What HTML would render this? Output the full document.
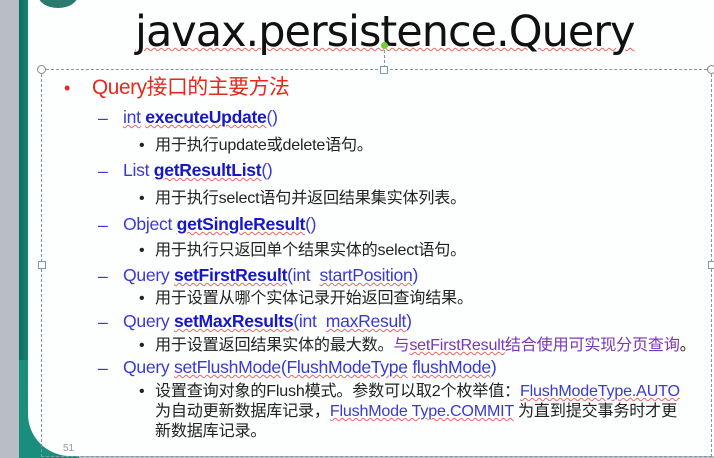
<!DOCTYPE html>
<html><head><meta charset="utf-8"><style>
body{margin:0;width:714px;height:458px;overflow:hidden;background:#b9bec4;position:relative;font-family:"Liberation Sans","Noto Sans CJK SC",sans-serif}
.a{position:absolute;white-space:nowrap}
.slide{position:absolute;left:28px;top:0;width:700px;height:456px;background:#fdfefe;border-bottom-left-radius:42px}
.teal{position:absolute;left:19px;top:0;width:12px;height:458px;background:linear-gradient(90deg,#0d6f63,#138c7c)}
.bl{position:absolute;left:19px;top:360px;width:60px;height:98px;background:#1a8e7c}
.t{font-size:17.6px;color:#3a3ad0;line-height:20px;letter-spacing:-0.3px}
.t b{color:#1717c8}
.s{font-size:16.1px;color:#222;line-height:20px;letter-spacing:-0.2px}
.d{color:#3a3ad0}
.w{text-decoration:underline wavy #e66;text-decoration-thickness:1px}
</style></head><body>
<div class="teal"></div>
<div class="bl"></div>
<div class="slide"></div>
<div class="a" style="left:38px;top:-18px;width:40px;height:26px;border-radius:50%;background:#2b7a6e"></div>
<div class="a" style="left:135px;top:4px;font-size:43px;color:#111;font-family:'DejaVu Sans','Liberation Sans',sans-serif;letter-spacing:-1px;line-height:56px"><span class="w">javax.persistence.Query</span></div>
<div class="a" style="left:41px;top:69px;width:669px;height:386px;border:1px dashed #8097aa"></div>
<div class="a" style="left:381px;top:42px;width:7px;height:7px;border-radius:50%;background:#7c3"></div>
<div class="a" style="left:384px;top:50px;height:18px;border-left:1px dashed #8097aa"></div>
<div class="a" style="left:37px;top:65px;width:7px;height:7px;border-radius:50%;border:1px solid #888;background:#fff"></div>
<div class="a" style="left:380px;top:66px;width:6px;height:6px;border:1px solid #8097aa;background:#fff"></div>
<div class="a" style="left:38px;top:261px;width:6px;height:6px;border:1px solid #8097aa;background:#fff"></div>
<div class="a" style="left:707px;top:65px;width:7px;height:7px;border-radius:50%;border:1px solid #888;background:#fff"></div>
<div class="a" style="left:708px;top:261px;width:6px;height:6px;border:1px solid #8097aa;background:#fff"></div>
<div class="a" style="left:64px;top:77px;font-size:18px;color:#e8271d;line-height:22px">•</div>
<div class="a" style="left:92px;top:75px;font-size:20.8px;color:#e8271d;line-height:26px;letter-spacing:-0.4px">Query接口的主要方法</div>

<div class="a t" style="left:98px;top:108px">–</div>
<div class="a t" style="left:123px;top:107px"><span class="w">int</span> <b class="w">executeUpdate</b>()</div>
<div class="a s" style="left:139px;top:135px">•</div><div class="a s" style="left:155px;top:135px">用于执行update或delete语句。</div>

<div class="a t" style="left:98px;top:161px">–</div>
<div class="a t" style="left:123px;top:160px">List <b class="w">getResultList</b>()</div>
<div class="a s" style="left:139px;top:188px">•</div><div class="a s" style="left:155px;top:188px">用于执行select语句并返回结果集实体列表。</div>

<div class="a t" style="left:98px;top:215px">–</div>
<div class="a t" style="left:123px;top:214px">Object <b class="w">getSingleResult</b>()</div>
<div class="a s" style="left:139px;top:240px">•</div><div class="a s" style="left:155px;top:240px">用于执行只返回单个结果实体的select语句。</div>

<div class="a t" style="left:98px;top:266px">–</div>
<div class="a t" style="left:123px;top:265px">Query <b class="w">setFirstResult</b>(int &nbsp;<span class="w">startPosition</span>)</div>
<div class="a s" style="left:139px;top:288px">•</div><div class="a s" style="left:155px;top:288px">用于设置从哪个实体记录开始返回查询结果。</div>

<div class="a t" style="left:98px;top:312px">–</div>
<div class="a t" style="left:123px;top:311px">Query <b class="w">setMaxResults</b>(int &nbsp;<span class="w">maxResult</span>)</div>
<div class="a s" style="left:139px;top:335px">•</div><div class="a s" style="left:155px;top:335px">用于设置返回结果实体的最大数。<span style="color:#7a35b8">与<span class="w">setFirstResult</span>结合使用可实现分页查询</span>。</div>

<div class="a t" style="left:98px;top:358px">–</div>
<div class="a t" style="left:123px;top:357px">Query <span class="w">setFlushMode</span>(<span class="w">FlushModeType</span> <span class="w">flushMode</span>)</div>
<div class="a s" style="left:139px;top:381px">•</div><div class="a s" style="left:155px;top:381px">设置查询对象的Flush模式。参数可以取2个枚举值：<span class="d w">FlushModeType.AUTO</span></div>
<div class="a s" style="left:155px;top:401px">为自动更新数据库记录，<span class="d w">FlushMode Type.COMMIT</span> 为直到提交事务时才更</div>
<div class="a s" style="left:155px;top:421px">新数据库记录。</div>
<div class="a" style="left:63px;top:443px;font-size:10px;color:#999">51</div>
</body></html>
